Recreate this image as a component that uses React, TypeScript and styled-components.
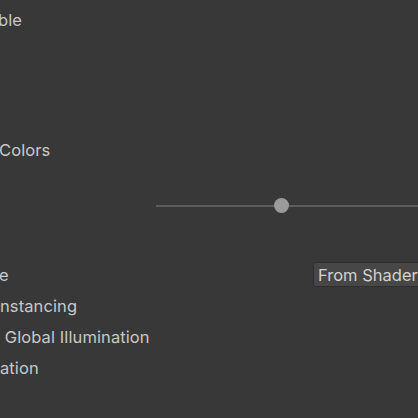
import React from "react";
import styled, { createGlobalStyle } from "styled-components";

const GlobalStyle = createGlobalStyle`
    html, body {
        margin: 0;
        padding: 0;
        background: #383838;
        overflow: hidden;
    }
    body {
        width: 418px;
        height: 418px;
        font-family: Inter, "Noto Sans", "DejaVu Sans", sans-serif;
    }
`;

const Panel = styled.div`
    display: flex;
    flex-direction: column;
    width: 418px;
    height: 418px;
    overflow: hidden;
`;

const Row = styled.div<{ $mt?: number; $field?: number }>`
    display: grid;
    grid-template-columns: ${(p) => p.$field ?? 156}px 1fr;
    align-items: center;
    height: 31px;
    margin-top: ${(p) => p.$mt ?? 0}px;
`;

const Label = styled.span<{ $shift?: number }>`
    margin-left: ${(p) => p.$shift ?? 0}px;
    font-size: 16.5px;
    color: #c8c8c8;
    white-space: pre;
    letter-spacing: 0.1px;
`;

const SliderTrack = styled.div`
    position: relative;
    width: 300px;
    height: 2px;
    background: #5d5d5d;
`;

const Thumb = styled.div`
    position: absolute;
    left: 118px;
    top: -7px;
    width: 15px;
    height: 15px;
    border-radius: 50%;
    background: #9b9b9b;
`;

const Dropdown = styled.div`
    display: flex;
    align-items: center;
    width: 140px;
    height: 25px;
    box-sizing: border-box;
    padding-left: 4px;
    background: #474747;
    border: 1px solid #2e2e2e;
    border-radius: 3px;
    font-size: 16.5px;
    color: #d2d2d2;
    white-space: nowrap;
`;

export default function App() {
    return (
        <>
            <GlobalStyle />
            <Panel>
                <Row $mt={4}>
                    <Label $shift={-2}>ble</Label>
                </Row>
                <Row $mt={99}>
                    <Label $shift={-1}>Colors</Label>
                </Row>
                <Row $mt={25}>
                    <span />
                    <SliderTrack>
                        <Thumb />
                    </SliderTrack>
                </Row>
                <Row $mt={38} $field={313}>
                    <Label $shift={-1}>e</Label>
                    <Dropdown>From Shader</Dropdown>
                </Row>
                <Row>
                    <Label>nstancing</Label>
                </Row>
                <Row $mt={0.5}>
                    <Label> Global Illumination</Label>
                </Row>
                <Row>
                    <Label>ation</Label>
                </Row>
            </Panel>
        </>
    );
}
